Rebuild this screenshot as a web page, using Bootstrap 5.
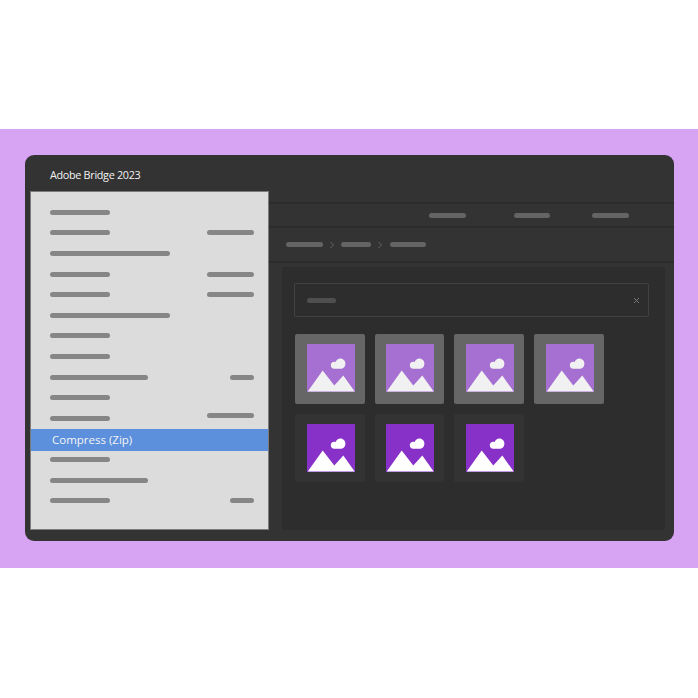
<!DOCTYPE html>
<html lang="en">
<head>
  <meta charset="UTF-8" />
  <meta name="viewport" content="width=device-width, initial-scale=1" />
  <title>Adobe Bridge 2023</title>
  <link href="https://cdn.jsdelivr.net/npm/bootstrap@5.3.0/dist/css/bootstrap.min.css" rel="stylesheet">
  <style>
    body { background: #fff; font-family: "Open Sans", sans-serif; }
    .faixa { margin-top: 129px; height: 439px; background: #d7a3f3; padding: 26px 24px 27px 25px; }
    .janela { position: relative; height: 386px; background: #333; border-radius: 9px; overflow: hidden; }

    .titulo { height: 47px; padding: 11.5px 0 0 25px; color: #f2f2f2; font-size: 10.8px; letter-spacing: -.3px; line-height: 16px; }
    .direita { margin-left: 244px; }
    .linha-topo { height: 24px; border-top: 2px solid #2c2c2c; padding-left: 160px; gap: 48px; }
    .linha-topo .traco:last-child { margin-left: -6px; }
    .linha-trilha { height: 37px; border-top: 2px solid #2c2c2c; border-bottom: 2px solid #2c2c2c; padding-left: 17px; }
    .traco { height: 5px; width: 36.5px; border-radius: 2.5px; background: #646464; }
    .traco-b { width: 30px; }
    .seta { width: 10px; margin: 0 4.5px 0 4px; }

    .painel { height: 263px; margin: 4px 9px 0 13px; padding: 16px 16px 0 12px; background: #2d2d2d; border-radius: 2px; }
    .busca { height: 34px; border: 1px solid #414141; border-radius: 2px; padding: 0 8px 0 12px; }
    .busca .traco { width: 29px; background: #4f4f4f; }
    .grade { display: grid; grid-template-columns: repeat(4, 69.6px); grid-template-rows: 70px 68.5px; gap: 9.6px 10px; padding: 17px 0 0 1.3px; }
    .miniatura { display: flex; justify-content: center; padding: 10px 0 0 1.5px; border-radius: 2px; background: #333; }
    .miniatura svg { display: block; }
    .miniatura-sel { background: #666; }

    .menu-popup { position: absolute; left: 5px; top: 36px; width: 239px; height: 339px; padding-top: 10px; background: #dcdcdc; border: 1px solid #7c7c7c; }
    .item { height: 20.6px; padding: 0 14px 0 19px; }
    .barra { height: 5px; width: 60px; border-radius: 2.5px; background: #868686; }
    .barra-longa { width: 120px; }
    .barra-media { width: 98px; }
    .barra-dir { width: 47px; }
    .barra-curta { width: 24px; }
    .acima { margin-bottom: 5px; }
    .item-ativo { height: 22px; margin: 0 0 -1.4px; padding-left: 21px; padding-top: 1px; background: #5c8fdc; color: #f5f5f5; font-size: 11.5px; font-weight: 500; }
  </style>
</head>
<body>

  <svg width="0" height="0" class="d-block">
    <symbol id="imagem" viewBox="0 0 48 48">
      <path d="M.7 47.6 15.7 26.4 27.3 41.6 36.3 31.6 47.7 47.6Z"/>
      <path d="M27.2 24.8h6.2c2.8 0 5-2.2 5-5.1 0-2.8-2.2-5.1-5-5.1-2.3 0-4 1.3-4.7 3.4-.6-.2-1-.3-1.6-.3-2 0-3.3 1.5-3.3 3.5 0 2.1 1.4 3.6 3.4 3.6Z"/>
    </symbol>
  </svg>

  <div class="faixa">
    <div class="janela">
      <div class="titulo">Adobe Bridge 2023</div>

      <div class="direita">
        <div class="linha-topo d-flex align-items-center">
          <div class="traco"></div>
          <div class="traco"></div>
          <div class="traco"></div>
        </div>
        <div class="linha-trilha d-flex align-items-center">
          <div class="traco"></div>
          <svg class="seta" width="10" height="10" viewBox="0 0 10 10" fill="none" stroke="#646464" stroke-width="1"><path d="M3.5 2 6.5 5 3.5 8"/></svg>
          <div class="traco traco-b"></div>
          <svg class="seta" width="10" height="10" viewBox="0 0 10 10" fill="none" stroke="#646464" stroke-width="1"><path d="M3.5 2 6.5 5 3.5 8"/></svg>
          <div class="traco"></div>
        </div>

        <div class="painel">
          <div class="busca d-flex align-items-center justify-content-between">
            <div class="traco"></div>
            <svg width="7" height="7" viewBox="0 0 7 7" fill="none" stroke="#777" stroke-width="1"><path d="M1 1 6 6M6 1 1 6"/></svg>
          </div>
          <div class="grade">
            <div class="miniatura miniatura-sel"><svg width="48" height="48"><rect width="48" height="48" fill="#a66fd2"/><use href="#imagem" fill="#f1f1f1"/></svg></div>
            <div class="miniatura miniatura-sel"><svg width="48" height="48"><rect width="48" height="48" fill="#a66fd2"/><use href="#imagem" fill="#f1f1f1"/></svg></div>
            <div class="miniatura miniatura-sel"><svg width="48" height="48"><rect width="48" height="48" fill="#a66fd2"/><use href="#imagem" fill="#f1f1f1"/></svg></div>
            <div class="miniatura miniatura-sel"><svg width="48" height="48"><rect width="48" height="48" fill="#a66fd2"/><use href="#imagem" fill="#f1f1f1"/></svg></div>
            <div class="miniatura"><svg width="48" height="48"><rect width="48" height="48" fill="#8731c9"/><use href="#imagem" fill="#fff"/></svg></div>
            <div class="miniatura"><svg width="48" height="48"><rect width="48" height="48" fill="#8731c9"/><use href="#imagem" fill="#fff"/></svg></div>
            <div class="miniatura"><svg width="48" height="48"><rect width="48" height="48" fill="#8731c9"/><use href="#imagem" fill="#fff"/></svg></div>
          </div>
        </div>
      </div>

      <!-- Menu aberto por cima da janela -->
      <div class="menu-popup">
        <div class="item d-flex align-items-center justify-content-between"><div class="barra"></div></div>
        <div class="item d-flex align-items-center justify-content-between"><div class="barra"></div><div class="barra barra-dir"></div></div>
        <div class="item d-flex align-items-center justify-content-between"><div class="barra barra-longa"></div></div>
        <div class="item d-flex align-items-center justify-content-between"><div class="barra"></div><div class="barra barra-dir"></div></div>
        <div class="item d-flex align-items-center justify-content-between"><div class="barra"></div><div class="barra barra-dir"></div></div>
        <div class="item d-flex align-items-center justify-content-between"><div class="barra barra-longa"></div></div>
        <div class="item d-flex align-items-center justify-content-between"><div class="barra"></div></div>
        <div class="item d-flex align-items-center justify-content-between"><div class="barra"></div></div>
        <div class="item d-flex align-items-center justify-content-between"><div class="barra barra-media"></div><div class="barra barra-curta"></div></div>
        <div class="item d-flex align-items-center justify-content-between"><div class="barra"></div></div>
        <div class="item d-flex align-items-center justify-content-between"><div class="barra"></div><div class="barra barra-dir acima"></div></div>
        <div class="item item-ativo d-flex align-items-center">Compress (Zip)</div>
        <div class="item d-flex align-items-center justify-content-between"><div class="barra"></div></div>
        <div class="item d-flex align-items-center justify-content-between"><div class="barra barra-media"></div></div>
        <div class="item d-flex align-items-center justify-content-between"><div class="barra"></div><div class="barra barra-curta"></div></div>
      </div>
    </div>
  </div>

  <script src="https://cdn.jsdelivr.net/npm/bootstrap@5.3.0/dist/js/bootstrap.bundle.min.js"></script>
</body>
</html>
